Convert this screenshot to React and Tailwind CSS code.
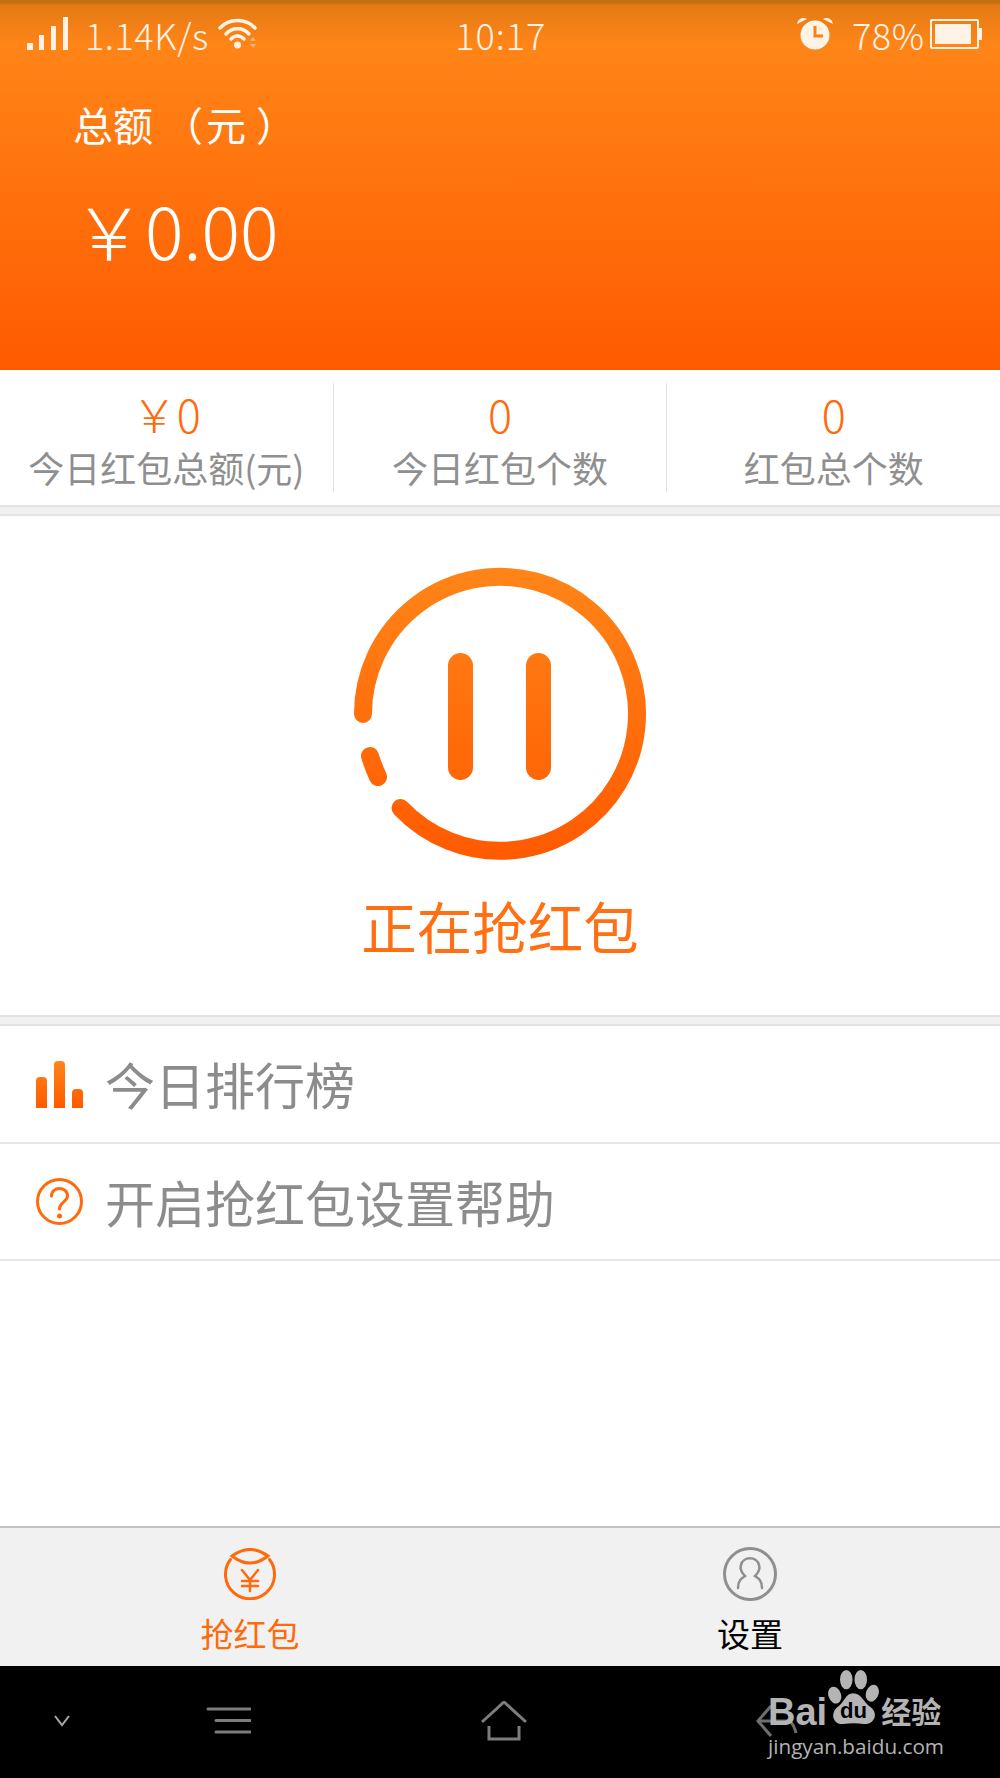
const stats = [
  { value: "￥0", label: "今日红包总额(元)" },
  { value: "0", label: "今日红包个数" },
  { value: "0", label: "红包总个数" },
];

function StatusBar() {
  return (
    <div className="grid h-[64px] grid-cols-3 items-center pt-[3px] text-[36px] font-light leading-none text-[#fff3e6]">
      <div className="flex items-center pl-[27px]">
        <svg width="41" height="33" viewBox="0 0 41 33" fill="#fff3e6">
          <rect x="0" y="26" width="6" height="7" />
          <rect x="12" y="18" width="5" height="15" />
          <rect x="24" y="9" width="5" height="24" />
          <rect x="36" y="0" width="5" height="33" />
        </svg>
        <span className="ml-[17px] w-[133px] tracking-[0.6px] whitespace-nowrap">1.14K/s</span>
        <svg width="42" height="34" viewBox="0 0 42 34" fill="none" stroke="#fff3e6" strokeWidth="3.5" strokeLinecap="round">
          <path d="M2 11C11 1 28 1 37 11" />
          <path d="M8 17C14 10 25 10 31 17" />
          <path d="M13 22C17 18 22 18 26 22" />
          <circle cx="19.5" cy="28" r="3.5" fill="#fff3e6" stroke="none" />
          <path d="M32 24l3-4 3 4zM32 27l3 4 3-4z" fill="#ffb27a" stroke="none" />
        </svg>
      </div>
      <div className="pl-[122px] tracking-[1px]">10:17</div>
      <div className="flex items-center justify-end pr-[18px]">
        <svg width="38" height="33" viewBox="0 0 38 33">
          <circle cx="19" cy="18" r="14.5" fill="#fff3e6" />
          <path d="M1 7C2 1 8 0 11 2zM37 7C36 1 30 0 27 2z" fill="#fff3e6" />
          <path d="M19 9v10h8" fill="none" stroke="#ff7d12" strokeWidth="3" />
        </svg>
        <span className="ml-[18px] w-[78px] tracking-[0.6px]">78%</span>
        <div className="flex items-center">
          <div className="h-[30px] w-[49px] rounded-[2px] border-[2px] border-[#fff3e6] p-[3px]">
            <div className="h-full w-[36px] bg-[#fff3e6]" />
          </div>
          <div className="h-[12px] w-[3px] bg-[#fff3e6]" />
        </div>
      </div>
    </div>
  );
}

function Header() {
  return (
    <header className="h-[370px] bg-[linear-gradient(to_bottom,#c66f12_0,#c66f12_3px,#e47a14_5px,#ff8518_45px,#ff5a00_100%)] text-white">
      <StatusBar />
      <div className="whitespace-nowrap pl-[73px] pt-[37px] text-[40px] font-normal leading-[46px]">
        总额<span className="ml-[10px]">（</span><span className="ml-[3px]">元</span><span className="ml-[10px]">）</span>
      </div>
      <div className="pl-[73px] pt-[40px] text-[72px] font-light leading-[84px]">￥0.00</div>
    </header>
  );
}

function Stats() {
  return (
    <section className="flex h-[137px] items-center border-b-2 border-[#e3e3e3]">
      {stats.map((stat, i) => (
        <div
          key={stat.label}
          className={`flex h-[109px] flex-1 flex-col items-center ${i < 2 ? "border-r border-[#e3e3e3]" : ""}`}
        >
          <div className="pt-[5px] text-[45px] font-light leading-[52px] text-[#ff6a0d]">{stat.value}</div>
          <div className="pt-[4px] text-[36px] font-normal leading-[46px] text-[#8f8f8f] whitespace-nowrap">{stat.label}</div>
        </div>
      ))}
    </section>
  );
}

function RingIcon() {
  return (
    <svg width="300" height="300" viewBox="0 0 300 300" fill="none">
      <defs>
        <linearGradient id="ringFill" gradientUnits="userSpaceOnUse" x1="0" y1="4" x2="0" y2="296">
          <stop offset="0" stopColor="#ff8518" />
          <stop offset="1" stopColor="#ff5a00" />
        </linearGradient>
      </defs>
      <g stroke="url(#ringFill)" strokeWidth="18" strokeLinecap="round">
        <path d="M13 150A137 137 0 1 1 50.5 244" />
        <path d="M20 192Q23 202 28 213" />
      </g>
      <rect x="98" y="89" width="25" height="127" rx="12.5" fill="url(#ringFill)" />
      <rect x="176" y="89" width="25" height="127" rx="12.5" fill="url(#ringFill)" />
    </svg>
  );
}

function BarsIcon() {
  return (
    <svg width="47" height="47" viewBox="0 0 47 47">
      <defs>
        <linearGradient id="barFill" x1="0" y1="0" x2="0" y2="47" gradientUnits="userSpaceOnUse">
          <stop offset="0" stopColor="#ff8518" />
          <stop offset="1" stopColor="#ff5a00" />
        </linearGradient>
      </defs>
      <path d="M0 47V20a4 4 0 0 1 4-4h3a4 4 0 0 1 4 4v27z" fill="url(#barFill)" />
      <path d="M18 47V4a4 4 0 0 1 4-4h3a4 4 0 0 1 4 4v43z" fill="url(#barFill)" />
      <path d="M36 47V32a4 4 0 0 1 4-4h3a4 4 0 0 1 4 4v15z" fill="url(#barFill)" />
    </svg>
  );
}

function HelpIcon() {
  return (
    <svg width="47" height="47" viewBox="0 0 47 47" fill="none" stroke="#ff6a0d" strokeWidth="3">
      <circle cx="23.5" cy="23.5" r="22" />
      <path d="M15.5 18C15.5 8 31.5 8 31.5 18C31.5 24 23.5 24 23.5 31" strokeLinecap="round" />
      <circle cx="23.5" cy="38" r="2.5" fill="#ff6a0d" stroke="none" />
    </svg>
  );
}

function Row({ icon, label, className }) {
  return (
    <div className={`flex items-center border-b-2 border-[#e6e6e6] pl-[36px] ${className}`}>
      <div className="flex w-[47px] shrink-0 justify-center">{icon}</div>
      <span className="ml-[22px] -translate-y-px text-[50px] font-normal leading-none text-[#8c8c8c]">{label}</span>
    </div>
  );
}

function GrabIcon() {
  return (
    <svg width="52" height="52" viewBox="0 0 52 52" fill="none" stroke="#ff6a0d" strokeWidth="3" strokeLinecap="round">
      <path d="M8 8Q26 -5 44 8Q26 22 8 8z" />
      <path d="M6.5 11.5A24.5 24.5 0 1 0 45.5 11.5" />
      <path d="M18 22l8 10 8-10M26 32v11M18 33h16M18 38h16" strokeWidth="2.5" />
    </svg>
  );
}

function UserIcon() {
  return (
    <svg width="54" height="54" viewBox="0 0 54 54" fill="none" stroke="#8f8f8f">
      <circle cx="27" cy="27" r="25.5" strokeWidth="3" />
      <path d="M15 41C15 33 19 31 22 29C18 25 17 21 18 18C20 9 34 9 36 18C37 21 36 25 32 29C35 31 39 33 39 41" strokeWidth="2.5" strokeLinecap="round" />
    </svg>
  );
}

function TabBar() {
  return (
    <nav className="flex h-[140px] border-t-2 border-[#c2c2c2] bg-[#f1f1f1]">
      <div className="flex flex-1 flex-col items-center pt-[20px] text-[#ff6a0d]">
        <GrabIcon />
        <span className="pt-[12px] text-[33px] font-normal leading-[42px]">抢红包</span>
      </div>
      <div className="flex flex-1 flex-col items-center pt-[19px] text-black">
        <UserIcon />
        <span className="pt-[11px] text-[33px] font-normal leading-[42px]">设置</span>
      </div>
    </nav>
  );
}

function SystemNav() {
  return (
    <div className="relative flex h-[112px] items-center bg-black pb-[2px]">
      <svg className="ml-[53px]" width="18" height="12" viewBox="0 0 18 12" fill="none" stroke="#a8a8a8" strokeWidth="2">
        <path d="M2 1l7 9 7-9" />
      </svg>
      <svg className="ml-[135px]" width="45" height="28" viewBox="0 0 45 28" fill="none" stroke="#7c7c7c" strokeWidth="3" strokeLinecap="round">
        <path d="M2 2H44M10 13.5H44M10 25H44" />
      </svg>
      <svg className="ml-[230px]" width="46" height="40" viewBox="0 0 46 40" fill="none" stroke="#7c7c7c" strokeWidth="3">
        <path d="M1 21L23 1L45 21M8 25V38H38V25" />
      </svg>
      <svg className="ml-[229px]" width="42" height="36" viewBox="0 0 42 36" fill="none" stroke="#6e6e6e" strokeWidth="3">
        <path d="M15 3L2 18L15 33M2 18H34Q38 22 40 30" />
      </svg>

      {/* baidu watermark sits over the nav */}
      <div className="absolute left-[768px] top-[3px] w-[180px] text-[#b4b4b4]">
        <div className="flex h-[58px] items-end">
          <span className="font-['Liberation_Sans',sans-serif] text-[38px] font-bold leading-[30px]">Bai</span>
          <svg width="54" height="58" viewBox="0 0 56 58" className="shrink-0" fill="#b4b4b4">
            <ellipse cx="8" cy="26" rx="6.5" ry="9" transform="rotate(-20 8 26)" />
            <ellipse cx="20" cy="10" rx="6.5" ry="10" />
            <ellipse cx="35" cy="10" rx="6.5" ry="10" />
            <ellipse cx="47" cy="24" rx="6.5" ry="9" transform="rotate(20 47 24)" />
            <path d="M27 24C36 24 38 34 46 39C54 46 48 57 38 56C31 55 24 55 17 56C7 57 3 46 10 39C18 34 19 24 27 24z" />
            <text x="27.5" y="50" textAnchor="middle" fill="#000" fontSize="23" fontWeight="700" fontFamily="Liberation Sans">du</text>
          </svg>
          <span className="text-[30px] font-bold leading-[34px] whitespace-nowrap">经验</span>
        </div>
        <div className="pt-[7px] font-['Open_Sans',sans-serif] text-[20.7px] leading-[24px] whitespace-nowrap">jingyan.baidu.com</div>
      </div>
    </div>
  );
}

export default function App() {
  return (
    <div className="flex h-[1778px] w-[1000px] flex-col overflow-hidden bg-white font-['Noto_Sans_CJK_SC','Noto_Sans',sans-serif]">
      <Header />
      <Stats />
      <div className="h-[9px] border-b-2 border-[#e3e3e3] bg-[#f1f1f1]" />
      <main className="flex h-[501px] flex-col items-center border-b-2 border-[#e3e3e3] pt-[48px]">
        <RingIcon />
        <div className="pt-[26px] text-[55.5px] font-normal leading-[70px] text-[#ff6f13]">正在抢红包</div>
      </main>
      <div className="h-[9px] border-b-2 border-[#e3e3e3] bg-[#f1f1f1]" />
      <Row className="h-[118px]" icon={<BarsIcon />} label="今日排行榜" />
      <Row className="h-[117px]" icon={<HelpIcon />} label="开启抢红包设置帮助" />
      <div className="flex-1" />
      <TabBar />
      <SystemNav />
    </div>
  );
}
